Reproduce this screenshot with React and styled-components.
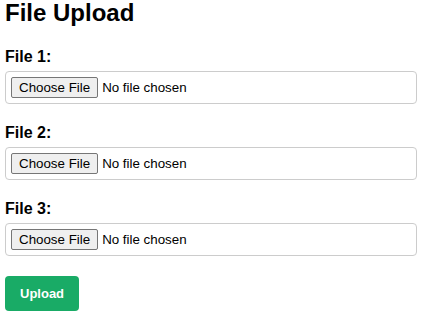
import React from "react";
import styled, { createGlobalStyle } from "styled-components";

const Global = createGlobalStyle`
  html, body { margin: 0; padding: 0; background: #fff; }
  body { font-family: "Liberation Sans", Arial, sans-serif; color: #000; }
`;

const Page = styled.div`
  padding: 1px 5px 0;
  max-width: 400px;
`;

const Title = styled.h1`
  font-size: 24px;
  font-weight: bold;
  line-height: 24px;
  margin: 0 0 23px;
`;

const Group = styled.div`
  margin-bottom: 20px;
`;

const Label = styled.label`
  display: block;
  font-size: 16px;
  font-weight: bold;
  line-height: 18px;
  margin-bottom: 5px;
`;

const FileInput = styled.input`
  display: block;
  box-sizing: content-box;
  width: 100%;
  height: 21px;
  padding: 5px;
  border: 1px solid #ccc;
  border-radius: 4px;
  font: 13.333px "Liberation Sans", Arial, sans-serif;
  color: #000;
  background: #fff;

  &::file-selector-button {
    font: 13.333px "Liberation Sans", Arial, sans-serif;
    color: #000;
    background: #efefef;
    border: 1px solid #767676;
    border-radius: 2px;
    padding: 1px 7px;
    margin: 0 4px 0 0;
    height: 21px;
  }
`;

const UploadButton = styled.button`
  display: block;
  padding: 10px 15px;
  background: #19ab66;
  color: #fff;
  border: none;
  border-radius: 4px;
  font: bold 13px "Liberation Sans", Arial, sans-serif;
  line-height: 15px;
  cursor: pointer;
`;

export default function App() {
  return (
    <>
      <Global />
      <Page>
        <Title>File Upload</Title>
        {[1, 2, 3].map((n) => (
          <Group key={n}>
            <Label htmlFor={`file${n}`}>File {n}:</Label>
            <FileInput type="file" id={`file${n}`} />
          </Group>
        ))}
        <UploadButton type="button">Upload</UploadButton>
      </Page>
    </>
  );
}
